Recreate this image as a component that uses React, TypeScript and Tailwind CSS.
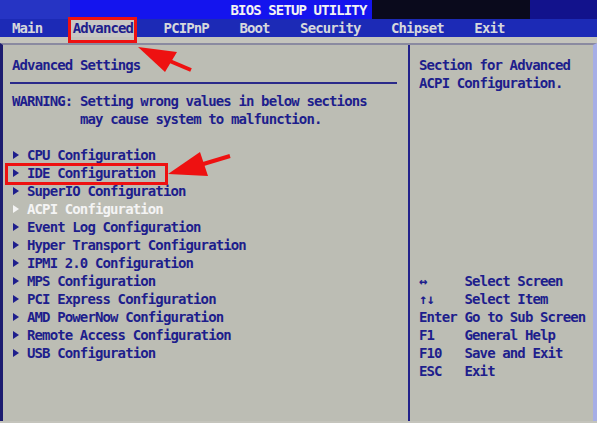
import React from "react";

const FONT = { fontFamily: '"DejaVu Sans Mono", "Liberation Mono", monospace' };

function Tri({ white }: { white?: boolean }) {
  return (
    <svg width="15" height="18" viewBox="0 0 15 18" className="shrink-0">
      <polygon points="1,5 7,9 1,13" fill={white ? "#f4f4f4" : "#1e1e8c"} />
    </svg>
  );
}

const items = [
  "CPU Configuration",
  "IDE Configuration",
  "SuperIO Configuration",
  "ACPI Configuration",
  "Event Log Configuration",
  "Hyper Transport Configuration",
  "IPMI 2.0 Configuration",
  "MPS Configuration",
  "PCI Express Configuration",
  "AMD PowerNow Configuration",
  "Remote Access Configuration",
  "USB Configuration",
];

const help: [string, string][] = [
  ["↔", "Select Screen"],
  ["↑↓", "Select Item"],
  ["Enter", "Go to Sub Screen"],
  ["F1", "General Help"],
  ["F10", "Save and Exit"],
  ["ESC", "Exit"],
];

export default function App() {
  return (
    <div
      className="relative w-[597px] h-[423px] overflow-hidden bg-[#c4c4bc] font-bold text-[14px] tracking-[-0.88px] leading-[18px]"
      style={FONT}
    >
      {/* title */}
      <div className="h-[19px] flex items-center justify-center text-[#f2f2f2] bg-[linear-gradient(90deg,#2634c4_0px,#2634c4_70px,#1414ee_70px,#1414ee_372px,#0a0a1c_372px,#0a0a1c_530px,#12128c_530px)]">
        BIOS SETUP UTILITY
      </div>
      {/* menu */}
      <div className="h-[18px] flex items-center pl-[12px] gap-[30.5px] bg-[#1c2ab6] text-[#d6d8dc]">
        <span>Main</span>
        <span className="bg-[#c8c8c4] text-[#1e1e8c] -mx-[2px] px-[2px]">Advanced</span>
        <span>PCIPnP</span>
        <span>Boot</span>
        <span>Security</span>
        <span>Chipset</span>
        <span>Exit</span>
      </div>
      <div className="h-[6px]" />
      {/* panel */}
      <div className="flex h-[378px] bg-[#bcbdb4] border-t-2 border-t-[#8a8aa0] border-l-[3px] border-l-[#1c1c70] border-r-4 border-r-[#a6aee6] text-[#1e1e8c]">
        <div className="w-[405px] pt-[11px]">
          <div className="pl-[9px]">Advanced Settings</div>
          <div className="mt-[8px] ml-[7px] w-[387px] h-[2px] bg-[#2a2a8a]" />
          <div className="mt-[8px] pl-[9px] whitespace-pre">
            {"WARNING: Setting wrong values in below sections\n         may cause system to malfunction."}
          </div>
          <div className="h-[18px]" />
          <div className="pl-[9px]">
            {items.map((t) => {
              const w = t.startsWith("ACPI");
              return (
                <div key={t} className={`flex items-center h-[18px] ${w ? "text-[#f4f4f4]" : ""}`}>
                  <Tri white={w} />
                  <span>{t}</span>
                </div>
              );
            })}
          </div>
        </div>
        <div className="w-[2px] bg-[#22228a]" />
        <div className="flex-1 pt-[11px] pl-[9px]">
          <div>Section for Advanced</div>
          <div>ACPI Configuration.</div>
          <div className="mt-[180px]">
            {help.map(([k, d]) => (
              <div key={k} className="flex h-[18px]">
                <span className="w-[45.5px] shrink-0">{k}</span>
                <span>{d}</span>
              </div>
            ))}
          </div>
        </div>
      </div>

      {/* annotations */}
      <svg
        className="absolute inset-0 pointer-events-none"
        width="597"
        height="423"
        viewBox="0 0 597 423"
      >
        <rect x="69.5" y="18.5" width="66" height="23" fill="none" stroke="#ee1111" strokeWidth="3" />
        <line x1="191" y1="70" x2="165" y2="59" stroke="#ee1111" strokeWidth="4" />
        <polygon points="138,47 177,52 165,72" fill="#ee1111" />
        <rect x="6.5" y="164.5" width="160" height="19" fill="none" stroke="#ee1111" strokeWidth="3" />
        <line x1="230" y1="156" x2="200" y2="165" stroke="#ee1111" strokeWidth="4" />
        <polygon points="168,174 200,152 208,176" fill="#ee1111" />
      </svg>
    </div>
  );
}
